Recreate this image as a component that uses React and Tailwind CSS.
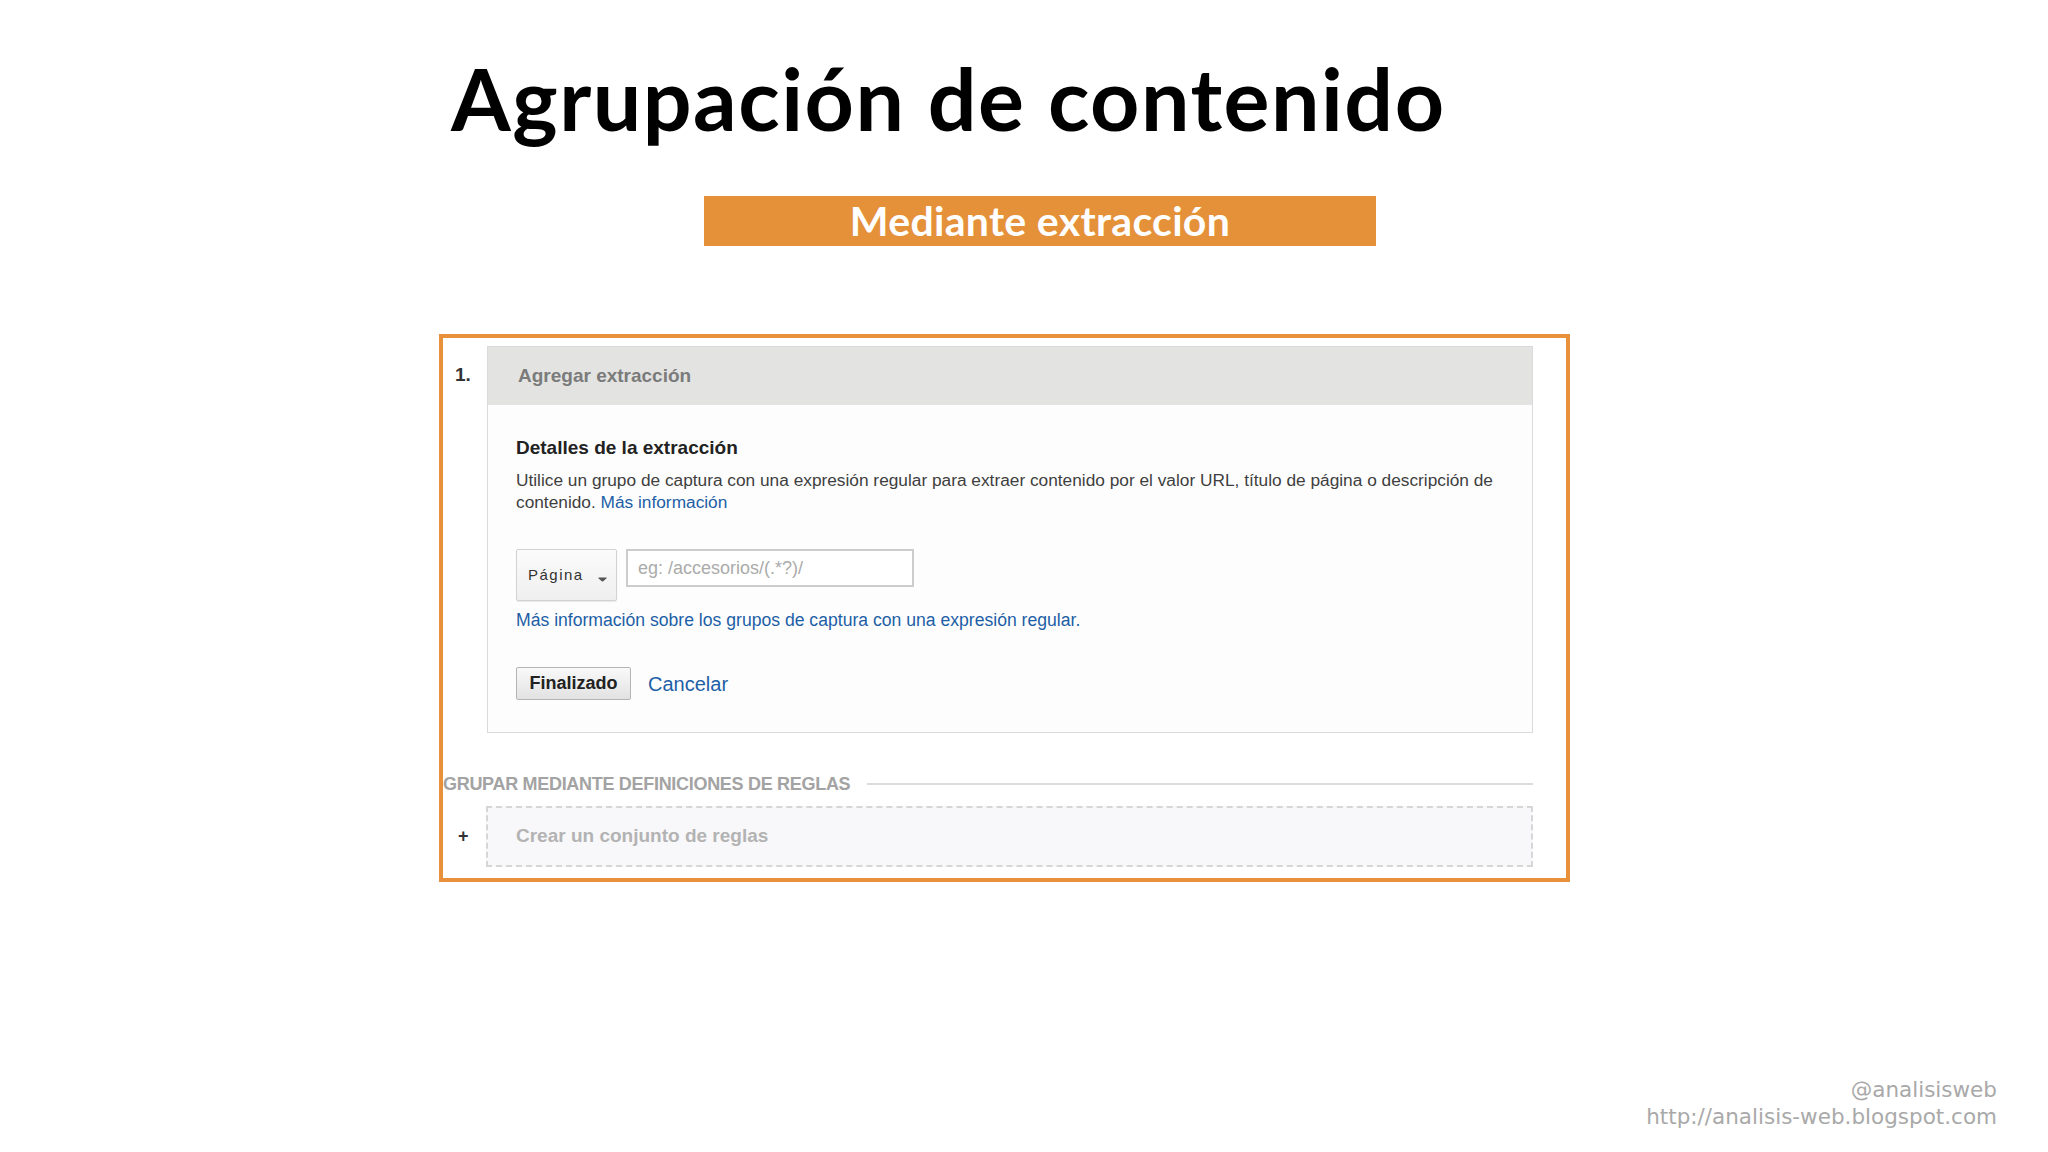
import React from "react";

const ui = { fontFamily: '"Liberation Sans", Arial, sans-serif' };

function Chevron() {
  return (
    <svg width="9" height="5" viewBox="0 0 9 5" className="ml-[14px] mt-[8px]">
      <path d="M1 1 L4.5 4 L8 1 Z" fill="#555" stroke="#555" strokeWidth="1.2" strokeLinejoin="round" />
    </svg>
  );
}

function ExtractionPanel() {
  return (
    <div className="w-[1046px] border border-[#dadada] bg-[#fdfdfd]">
      <div className="h-[58px] bg-[#e3e4e2] flex items-center pl-[30px]">
        <span className="text-[19px] font-bold text-[#7b7b7b]">Agregar extracción</span>
      </div>
      <div className="px-[28px] pt-[32px] pb-[32px]">
        <h3 className="text-[19px] leading-[22px] font-bold text-[#222]">Detalles de la extracción</h3>
        <p className="mt-[10px] text-[17.3px] leading-[22px] text-[#3f3f3f] whitespace-nowrap">
          Utilice un grupo de captura con una expresión regular para extraer contenido por el valor URL, título de página o descripción de
          <br />
          contenido. <span className="text-[#1d5fa6]">Más información</span>
        </p>
        <div className="mt-[36px] flex items-start">
          <div className="w-[101px] h-[52px] border border-[#d2d2d2] rounded-[2px] bg-gradient-to-b from-[#fbfbfb] to-[#efefef] shadow-[0_1px_1px_rgba(0,0,0,0.08)] flex items-center pl-[11px]">
            <span className="text-[15px] tracking-[1.5px] text-[#333]">Página</span>
            <Chevron />
          </div>
          <input
            readOnly
            placeholder="eg: /accesorios/(.*?)/"
            className="ml-[9px] w-[288px] h-[38px] border-2 border-[#cccccc] bg-white px-[10px] text-[18px] outline-none placeholder:text-[#ababab]"
          />
        </div>
        <p className="mt-[8px] text-[17.6px] leading-[22px] text-[#1d5fa6] whitespace-nowrap">
          Más información sobre los grupos de captura con una expresión regular.
        </p>
        <div className="mt-[36px] flex items-center">
          <button className="w-[115px] h-[33px] border border-[#b4b4b4] rounded-[2px] bg-gradient-to-b from-[#f9f9f9] to-[#e2e2e2] text-[18px] font-bold text-[#222] flex items-center justify-center">
            Finalizado
          </button>
          <span className="ml-[17px] text-[20px] text-[#1d5fa6]">Cancelar</span>
        </div>
      </div>
    </div>
  );
}

export default function App() {
  return (
    <div className="w-[2048px] h-[1152px] bg-white flex flex-col">
      <h1
        className="pt-[55px] pl-[451px] text-[86px] leading-none font-bold tracking-[1.5px] text-black"
        style={{ fontFamily: "Lato, sans-serif" }}
      >
        Agrupación de contenido
      </h1>
      <div
        className="mt-[55px] ml-[704px] w-[672px] h-[50px] bg-[#e5913a] flex items-center justify-center text-white text-[41px] font-bold tracking-[0.3px]"
        style={{ fontFamily: "Lato, sans-serif" }}
      >
        Mediante extracción
      </div>

      <div className="mt-[88px] ml-[439px] w-[1131px] h-[548px] border-4 border-[#e8913a]" style={ui}>
        <div className="pt-[8px] flex items-start">
          <div className="w-[44px] h-[59px] flex items-center pl-[12px]">
            <span className="text-[19px] font-bold text-[#333]">1.</span>
          </div>
          <ExtractionPanel />
        </div>

        <div className="mt-[40px] h-[22px] flex items-center pr-[33px]">
          <span className="text-[18px] font-bold tracking-[-0.3px] text-[#a3a3a3] whitespace-nowrap">
            GRUPAR MEDIANTE DEFINICIONES DE REGLAS
          </span>
          <div className="ml-[17px] flex-1 h-[2px] bg-[#dcdcdc]" />
        </div>

        <div className="mt-[11px] flex items-center">
          <div className="w-[43px] pl-[15px] text-[18px] font-bold text-[#333]">+</div>
          <div className="w-[1047px] h-[61px] border-2 border-dashed border-[#d6d6d6] bg-[#f8f8fa] flex items-center pl-[28px]">
            <span className="text-[19px] font-bold text-[#b3b3b3]">Crear un conjunto de reglas</span>
          </div>
        </div>
      </div>

      <div
        className="mt-[194px] pr-[51px] text-right text-[21.5px] leading-[27px] text-[#a9a9a9]"
        style={{ fontFamily: '"DejaVu Sans", Verdana, sans-serif' }}
      >
        <div>@analisisweb</div>
        <div>http://analisis-web.blogspot.com</div>
      </div>
    </div>
  );
}
